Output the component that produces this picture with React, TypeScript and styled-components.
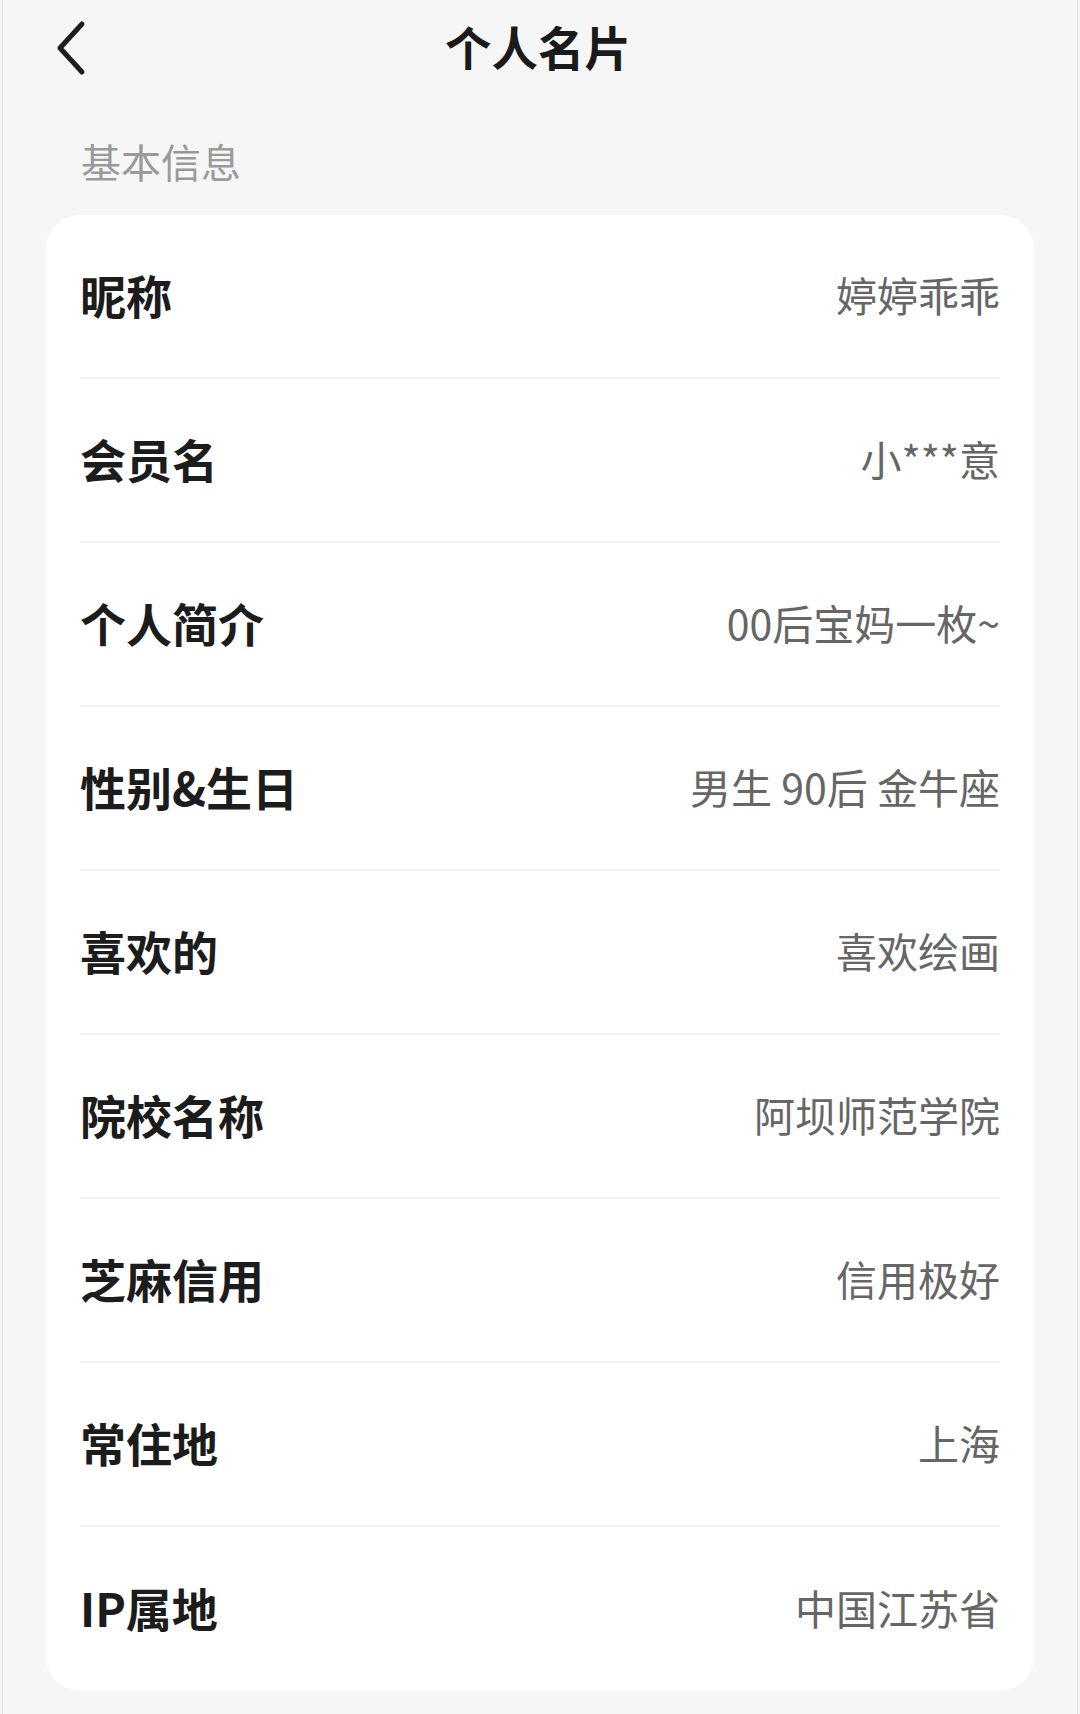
import styled, { createGlobalStyle } from "styled-components";

const FONT = `"Noto Sans CJK SC", "Noto Sans", sans-serif`;

const GlobalStyle = createGlobalStyle`
  html, body {
    margin: 0;
    padding: 0;
    background: #f6f6f6;
  }
  body {
    font-family: ${FONT};
  }
`;

interface IRow {
  label: string;
  value: string;
}

const ROWS: IRow[] = [
  { label: "昵称", value: "婷婷乖乖" },
  { label: "会员名", value: "小***意" },
  { label: "个人简介", value: "00后宝妈一枚~" },
  { label: "性别&生日", value: "男生 90后 金牛座" },
  { label: "喜欢的", value: "喜欢绘画" },
  { label: "院校名称", value: "阿坝师范学院" },
  { label: "芝麻信用", value: "信用极好" },
  { label: "常住地", value: "上海" },
  { label: "IP属地", value: "中国江苏省" },
];

const Frame = styled.div`
  box-sizing: border-box;
  min-height: 1714px;
  margin: 0 2px;
  border-left: 1px solid #e2e2e2;
  border-right: 1px solid #e2e2e2;
  background: #f6f6f6;
  padding-bottom: 25px;
`;

const Header = styled.header`
  position: relative;
  height: 96px;
  display: flex;
  align-items: center;
  justify-content: center;
`;

const BackButton = styled.button`
  position: absolute;
  left: 44px;
  top: 16px;
  width: 48px;
  height: 64px;
  padding: 0;
  border: none;
  background: none;
  display: flex;
  align-items: center;
  justify-content: center;
  cursor: pointer;
`;

const Title = styled.h1`
  margin: -4px 0 0 -4px;
  font-family: ${FONT};
  font-size: 46.5px;
  font-weight: 700;
  color: #1a1a1a;
  line-height: 1;
`;

const SectionTitle = styled.div`
  padding: 41px 0 30px 78px;
  font-size: 40px;
  line-height: 48px;
  color: #9a9a9a;
`;

const Card = styled.section`
  margin: 0 43px;
  background: #fff;
  border-radius: 34px;
  padding: 0 34px;
`;

const Row = styled.div<{ $last?: boolean }>`
  box-sizing: border-box;
  height: 164px;
  padding-bottom: 5px;
  display: flex;
  align-items: center;
  justify-content: space-between;
  border-bottom: ${(p) => (p.$last ? "none" : "2px solid #f1f1f1")};
`;

const Label = styled.span`
  font-size: 46px;
  font-weight: 700;
  color: #1c1c1c;
`;

const Value = styled.span`
  font-size: 41px;
  font-weight: 400;
  color: #666;
`;

const BackIcon = () => (
  <svg width="34" height="56" viewBox="0 0 34 56" fill="none">
    <path
      d="M28 4 L6 28 L28 52"
      stroke="#1e1e1e"
      strokeWidth="5"
      strokeLinecap="round"
      strokeLinejoin="round"
    />
  </svg>
);

export default function App() {
  return (
    <>
      <GlobalStyle />
      <Frame>
        <Header>
          <BackButton aria-label="返回">
            <BackIcon />
          </BackButton>
          <Title>个人名片</Title>
        </Header>
        <SectionTitle>基本信息</SectionTitle>
        <Card>
          {ROWS.map((r, i) => (
            <Row key={r.label} $last={i === ROWS.length - 1}>
              <Label>{r.label}</Label>
              <Value>{r.value}</Value>
            </Row>
          ))}
        </Card>
      </Frame>
    </>
  );
}
